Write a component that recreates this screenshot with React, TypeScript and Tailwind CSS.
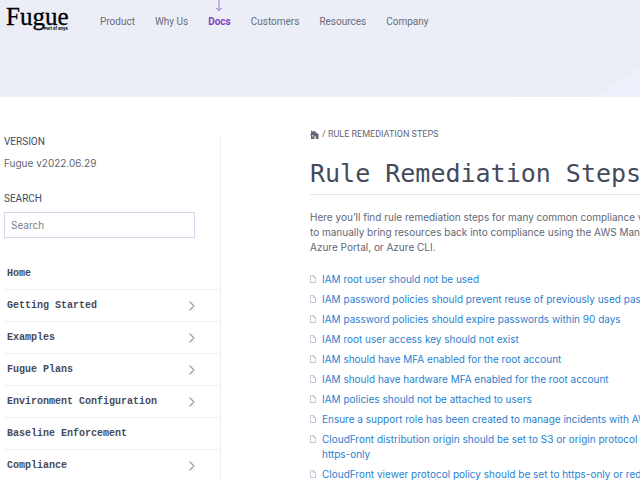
import { ChevronRight } from "lucide-react";

const navLinks = ["Product", "Why Us", "Docs", "Customers", "Resources", "Company"];

const sections = [
  { title: "Home", nested: false },
  { title: "Getting Started", nested: true },
  { title: "Examples", nested: true },
  { title: "Fugue Plans", nested: true },
  { title: "Environment Configuration", nested: true },
  { title: "Baseline Enforcement", nested: false },
  { title: "Compliance", nested: true },
];

const rules = [
  ["IAM root user should not be used"],
  ["IAM password policies should prevent reuse of previously used passwords"],
  ["IAM password policies should expire passwords within 90 days"],
  ["IAM root user access key should not exist"],
  ["IAM should have MFA enabled for the root account"],
  ["IAM should have hardware MFA enabled for the root account"],
  ["IAM policies should not be attached to users"],
  ["Ensure a support role has been created to manage incidents with AWS Support"],
  ["CloudFront distribution origin should be set to S3 or origin protocol policy", "https-only"],
  ["CloudFront viewer protocol policy should be set to https-only or redirect"],
];

function Arrow() {
  return (
    <svg className="absolute -top-[15px] left-1/2 h-3 w-2 -translate-x-1/2" viewBox="0 0 8 12" fill="none" stroke="#a47bd2" aria-hidden="true">
      <path d="M4 0v11M1 8.3c1.600.3 2.600 1.200 3 2.700.4-1.500 1.400-2.400 3-2.700" />
    </svg>
  );
}

function Header() {
  return (
    <header className="relative h-[97px] overflow-hidden bg-[#ebeef7]">
      <svg className="absolute top-0 left-[430px] h-full w-[210px]" viewBox="0 0 210 97" aria-hidden="true">
        <path d="M0 0H210V97H82L0 33Z" fill="#eaedf6" />
        <path d="M210 67V97H165Z" fill="#ebf0fa" />
      </svg>
      <div className="relative flex">
        <a href="#home" aria-label="Fugue, part of Snyk" className="ml-1.5 block h-9 w-[94px] shrink-0 text-black">
          <svg viewBox="0 0 94 36" className="h-9 w-[94px]" fill="currentColor">
            <text x="0" y="25" fontSize="25" stroke="currentColor" strokeWidth="0.3" fontFamily="'Liberation Serif',serif">Fugue</text>
            <text x="38" y="30" fontSize="4" fontWeight="700" fontFamily="Inter,sans-serif">Part of Snyk</text>
          </svg>
        </a>
        <nav className="mt-[15px] flex gap-5 font-['Roboto',sans-serif] text-[10px] leading-[14px] whitespace-nowrap text-[#686c7d]">
          {navLinks.map((name) => (
            <a key={name} href={"#" + name} className={name === "Docs" ? "relative font-bold text-[#8140bd]" : ""}>
              {name === "Docs" && <Arrow />}
              {name}
            </a>
          ))}
        </nav>
      </div>
    </header>
  );
}

function Sidebar() {
  return (
    <aside className="mt-10 w-[221px] shrink-0 border-r border-[#eeeff3] pl-1">
      <h2 className="font-['Roboto',sans-serif] text-[10px] leading-[10px] text-[#444b5c]">VERSION</h2>
      <p className="mt-2 text-[10px] leading-4">Fugue v2022.06.29</p>
      <label htmlFor="search" className="mt-5 block font-['Roboto',sans-serif] text-[10px] leading-4 text-[#444b5c]">SEARCH</label>
      <input
        id="search"
        type="search"
        placeholder="Search"
        className="mt-[5px] block h-[26px] w-[191px] border border-[#d5d6ea] px-1.5 text-[10px] outline-none placeholder:text-[#7a7f8d]"
      />
      <ul className="mt-5 font-['Liberation_Mono',monospace] text-[10px] font-bold text-[#444b5c]">
        {sections.map(({ title, nested }) => (
          <li key={title} className="border-b border-[#eeeff3]">
            <a href="#section" className="flex h-[31px] items-center justify-between pr-5 pl-[3px] whitespace-nowrap">
              {title}
              {nested && <ChevronRight className="size-4 text-[#a0a4b5]" strokeWidth={2} />}
            </a>
          </li>
        ))}
      </ul>
    </aside>
  );
}

export default function App() {
  return (
    <div className="h-screen overflow-hidden bg-white font-['Inter',sans-serif] text-[#626775]">
      <Header />
      <div className="flex">
        <Sidebar />
        <main className="ml-[89px] min-w-0 flex-1 overflow-hidden pt-[29px] whitespace-nowrap">
          <nav aria-label="Breadcrumb" className="flex items-center gap-[3px] font-['Roboto',sans-serif] text-[9px] leading-4">
            <a href="#home" aria-label="Home">
              <svg className="size-[9px]" viewBox="0 0 9 9" fill="#626775" aria-hidden="true">
                <path d="M1 .8h1.200v1L4 .8l5 4-.5.6V9H5.800V6.300H4.500V9H1V5.400L0 5l1-1.500Z" />
                <path d="M2.200 5.200h1.300v1.300H2.200Z" fill="#fff" />
              </svg>
            </a>
            <span>/ RULE REMEDIATION STEPS</span>
          </nav>
          <h1 className="mt-4 h-[37px] border-b border-[#e4e6ec] font-['DejaVu_Sans_Mono',monospace] text-[25px] leading-[32px] text-[#444b5c]">Rule Remediation Steps</h1>
          <p className="mt-[15px] text-[10px] leading-[15px]">
            Here you’ll find rule remediation steps for many common compliance violations.<br />
            to manually bring resources back into compliance using the AWS Management Console,<br />
            Azure Portal, or Azure CLI.
          </p>
          <ul className="mt-[17px] flex flex-col gap-[5px] text-[10px] leading-[15px] text-[#2a7fd0]">
            {rules.map((lines) => (
              <li key={lines[0]} className="flex">
                <svg className="mt-[3px] mr-1 h-2 w-2 shrink-0" viewBox="0 0 8 8" fill="none" stroke="#c5c6d8" aria-hidden="true">
                  <path d="M.5.5h3l2 2v5h-5Z M3.500.5v2h2" />
                </svg>
                <a href="#rule">
                  {lines.map((line) => (
                    <span key={line} className="block">{line}</span>
                  ))}
                </a>
              </li>
            ))}
          </ul>
        </main>
      </div>
    </div>
  );
}
